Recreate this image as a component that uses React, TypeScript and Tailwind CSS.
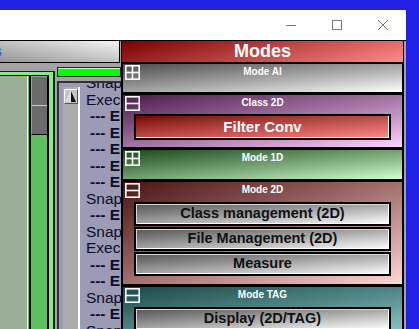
import React from 'react';

const logLines: { text: string; err?: boolean }[] = [
  { text: 'Snapshot saved' },
  { text: 'Execute filter' },
  { text: '--- Error: no input', err: true },
  { text: '--- Error: no input', err: true },
  { text: '--- Error: no input', err: true },
  { text: '--- Error: no input', err: true },
  { text: '--- Error: no input', err: true },
  { text: 'Snapshot saved' },
  { text: '--- Error: no input', err: true },
  { text: 'Snapshot saved' },
  { text: 'Execute filter' },
  { text: '--- Error: no input', err: true },
  { text: '--- Error: no input', err: true },
  { text: 'Snapshot saved' },
  { text: '--- Error: no input', err: true },
  { text: 'Snapshot saved' },
];

const Toggle = ({ open }: { open: boolean }) => (
  <svg width="15" height="15" viewBox="0 0 15 15">
    <rect x="0.8" y="0.8" width="13.4" height="13.4" fill="none" stroke="white" strokeWidth="1.6" />
    <line x1="1" y1="7.5" x2="14" y2="7.5" stroke="white" strokeWidth="1.6" />
    {!open && <line x1="7.5" y1="1" x2="7.5" y2="14" stroke="white" strokeWidth="1.6" />}
  </svg>
);

const SectionHeader = ({ title, open, h }: { title: string; open: boolean; h: string }) => (
  <div className={`grid grid-cols-[15px_1fr_15px] px-[2px] pt-[1px] ${h}`}>
    <Toggle open={open} />
    <div className="pt-[1px] text-center text-[10px] leading-[12px] font-bold text-white">{title}</div>
    <div />
  </div>
);

const GrayButton = ({ label }: { label: string }) => (
  <div className="h-[24px] flex items-center justify-center border-2 border-black bg-gradient-to-br from-[#555555] to-white shadow-[inset_1px_1px_0_#d8d8d8,inset_-1px_-1px_0_#ffffff] text-[14.5px] font-bold text-[#111111]">
    {label}
  </div>
);

export default function App() {
  return (
    <div className="w-[419px] h-[329px] overflow-hidden bg-[#2020e4] font-['Liberation_Sans',Arial,sans-serif]">
      <div className="mt-[10px] w-[406px] h-[319px] flex flex-col bg-[#a3a3a3]">
        {/* title bar */}
        <div className="h-[31px] shrink-0 bg-white border-b border-black flex justify-end">
          <div className="w-[46px] flex items-center justify-center">
            <svg width="10" height="10" viewBox="0 0 10 10">
              <line x1="0" y1="5.5" x2="10" y2="5.5" stroke="#777" strokeWidth="1" />
            </svg>
          </div>
          <div className="w-[46px] flex items-center justify-center">
            <svg width="10" height="10" viewBox="0 0 10 10">
              <rect x="0.5" y="0.5" width="9" height="9" fill="none" stroke="#777" strokeWidth="1" />
            </svg>
          </div>
          <div className="w-[46px] flex items-center justify-center">
            <svg width="10" height="10" viewBox="0 0 10 10">
              <path d="M0 0 L10 10 M10 0 L0 10" stroke="#777" strokeWidth="1" />
            </svg>
          </div>
        </div>

        <div className="flex flex-1 min-h-0">
          {/* left side */}
          <div className="w-[121px] shrink-0 flex flex-col">
            <div className="w-[120px] h-[22px] shrink-0 border-r border-b border-black bg-gradient-to-tr from-[#959595] to-[#f4f4f4] flex items-center overflow-hidden">
              <span className="-ml-[31px] text-[14px] text-[#2060c8]">Tools</span>
            </div>
            <div className="flex flex-1 min-h-0">
              {/* green panel */}
              <div className="mt-[8px] w-[55px] flex border-t border-r-2 border-[#0e2a0e] bg-[#8de58d] pt-[3px] pr-[4px]">
                <div className="flex flex-1 border-t border-r-2 border-black">
                  <div className="w-[28px] bg-[#9aae98] border-r border-white" />
                  <div className="w-[1px] bg-[#5fbf5f]" />
                  <div className="w-[2px] bg-black" />
                  <div className="w-[16px] flex flex-col">
                    <div className="h-[30px] bg-[#6b6b6b] border-l border-t border-[#9a9a9a] border-b border-b-[#c8c8c8]" />
                    <div className="h-[29px] bg-[#6b6b6b] border-l border-[#9a9a9a] border-b border-b-black" />
                    <div className="flex-1 bg-[#5fbf5f]" />
                  </div>
                </div>
              </div>

              <div className="flex-1 flex flex-col min-w-0">
                <div className="mt-[4px] ml-[2px] h-[10px] shrink-0 border border-[#202020] bg-[#00ff00] shadow-[inset_0_1px_0_#c0ffc0]" />
                <div className="mt-[4px] ml-[2px] flex-1 min-h-0 border-l-2 border-t-2 border-[#30303c] bg-[#9b9bb5] flex">
                  <div className="ml-[4px] mt-[4px] w-[17px] shrink-0 bg-[#acacac] border-r-2 border-white">
                    <div className="ml-[1px] mt-[2px] w-[14px] h-[15px] bg-[#c4c4c4] border-t border-l border-white border-b border-r border-b-[#555] border-r-[#555] flex items-center justify-center">
                      <svg width="10" height="11" viewBox="0 0 10 11">
                        <polygon points="5,0 0,11 5,11" fill="#d8d8d8" stroke="#fff" strokeWidth="0.5" />
                        <polygon points="5,0 10,11 5,11" fill="#111" />
                      </svg>
                    </div>
                  </div>
                  <div className="flex-1 min-w-0 overflow-hidden pl-[6px]">
                    <div className="-mt-[8px] whitespace-nowrap text-[15.5px] leading-[16.5px] text-[#0c0c2c]">
                      {logLines.map((l, i) => (
                        <div key={i} className={l.err ? 'pl-[4px] font-bold' : ''}>
                          {l.text}
                        </div>
                      ))}
                    </div>
                  </div>
                </div>
              </div>
            </div>
          </div>

          {/* modes panel */}
          <div className="w-[285px] shrink-0 bg-black pl-[1px] pr-[1px] border-r-2 border-[#a3a3a3] flex flex-col">
            <div className="h-[21px] shrink-0 bg-[linear-gradient(165deg,#780000,#ff8a8a)] flex items-center justify-center text-[18px] font-bold text-white">
              Modes
            </div>

            <div className="mt-[2px] mx-[1px] h-[28px] shrink-0 bg-gradient-to-br from-[#4e4e4e] to-white">
              <SectionHeader title="Mode AI" open={false} h="h-[18px]" />
            </div>

            <div className="mt-[3px] mx-[1px] h-[52px] shrink-0 bg-gradient-to-br from-[#4c1c4c] to-[#ffd2ff]">
              <SectionHeader title="Class 2D" open={true} h="h-[19px]" />
              <div className="mx-[11px] h-[26px] flex items-center justify-center border-2 border-black bg-gradient-to-br from-[#7a0000] to-[#ff8a8a] shadow-[inset_-1px_-1px_0_#ffffff] text-[15px] font-bold text-white">
                Filter Conv
              </div>
            </div>

            <div className="mt-[3px] mx-[1px] h-[29px] shrink-0 bg-gradient-to-br from-[#1c4a1c] to-[#d0ffd0]">
              <SectionHeader title="Mode 1D" open={false} h="h-[18px]" />
            </div>

            <div className="mt-[3px] mx-[1px] h-[102px] shrink-0 bg-gradient-to-br from-[#4a1414] to-[#ffd6d6]">
              <SectionHeader title="Mode 2D" open={true} h="h-[20px]" />
              <div className="mx-[11px] flex flex-col gap-[1px]">
                <GrayButton label="Class management (2D)" />
                <GrayButton label="File Management (2D)" />
                <GrayButton label="Measure" />
              </div>
            </div>

            <div className="mt-[3px] mx-[1px] flex-1 min-h-0 overflow-hidden bg-gradient-to-br from-[#1a4a4a] to-[#86c0c0]">
              <SectionHeader title="Mode TAG" open={true} h="h-[20px]" />
              <div className="mx-[11px] flex flex-col gap-[1px]">
                <GrayButton label="Display (2D/TAG)" />
              </div>
            </div>
          </div>
        </div>
      </div>
    </div>
  );
}
